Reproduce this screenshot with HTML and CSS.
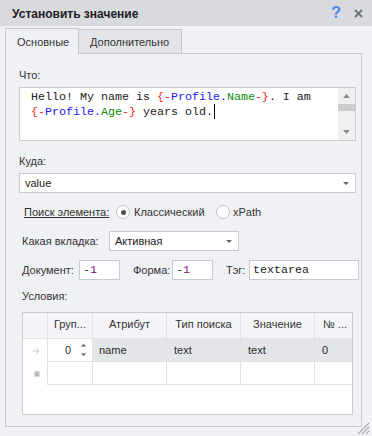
FILE: index.html
```html
<!DOCTYPE html>
<html>
<head>
<meta charset="utf-8">
<link rel="stylesheet" href="styles.css">
</head>
<body>
<div class="dialog">
  <div class="titlebar">
    <div class="title">Установить значение</div>
    <div class="tb-icons">
      <span class="help">?</span>
      <svg class="close" width="9" height="9" viewBox="0 0 9 9"><path d="M1 1L8 8M8 1L1 8" stroke="#6e7178" stroke-width="1.8" fill="none"/></svg>
    </div>
  </div>
  <div class="tabs">
    <div class="tab active">Основные</div>
    <div class="tab">Дополнительно</div>
  </div>
  <div class="panel">
    <div class="label l-what">Что:</div>
    <div class="codebox">
      <div class="code"><span class="t">Hello! My name is </span><span class="r">{-</span><span class="b">Profile.</span><span class="g">Name</span><span class="r">-}</span><span class="t">. I am</span><br><span class="r">{-</span><span class="b">Profile.</span><span class="g">Age</span><span class="r">-}</span><span class="t"> years old.</span><span class="caret"></span></div>
      <div class="vscroll">
        <div class="sbtn"><svg width="7" height="4" viewBox="0 0 7 4"><path d="M0 4L3.5 0L7 4Z" fill="#8a8c91"/></svg></div>
        <div class="thumb"></div>
        <div class="strack"></div>
        <div class="sbtn"><svg width="7" height="4" viewBox="0 0 7 4"><path d="M0 0L3.5 4L7 0Z" fill="#8a8c91"/></svg></div>
      </div>
    </div>
    <div class="label l-where">Куда:</div>
    <div class="combo wide"><span>value</span><svg width="6" height="3" viewBox="0 0 6 3"><path d="M0 0H6L3 3Z" fill="#666"/></svg></div>
    <div class="radiorow">
      <span class="link">Поиск элемента:</span>
      <span class="radio on"></span><span class="rlabel r1">Классический</span>
      <span class="radio second"></span><span class="rlabel">xPath</span>
    </div>
    <div class="tabrow">
      <span class="label lw-tab">Какая вкладка:</span>
      <div class="combo small"><span>Активная</span><svg width="6" height="3" viewBox="0 0 6 3"><path d="M0 0H6L3 3Z" fill="#666"/></svg></div>
    </div>
    <div class="fieldrow">
      <span class="label lw-doc">Документ:</span>
      <div class="inp num"><span class="dash">-</span><span class="one">1</span></div>
      <span class="label lw-form">Форма:</span>
      <div class="inp num"><span class="dash">-</span><span class="one">1</span></div>
      <span class="label lw-tag">Тэг:</span>
      <div class="inp tag">textarea</div>
    </div>
    <div class="label l-cond">Условия:</div>
    <div class="grid">
      <div class="grow head">
        <div class="c rh"></div>
        <div class="c c1">Груп...</div>
        <div class="c c2">Атрибут</div>
        <div class="c c3">Тип поиска</div>
        <div class="c c4">Значение</div>
        <div class="c c5">№ ...</div>
      </div>
      <div class="grow data sel">
        <div class="c rh"><svg width="7" height="6" viewBox="0 0 7 6"><path d="M0 3H6M3.5 0.5L6 3L3.5 5.5" stroke="#c4c5c9" fill="none" stroke-width="1"/></svg></div>
        <div class="c c1 edit"><span class="zero">0</span><svg class="spin" width="7" height="14" viewBox="0 0 7 14"><path d="M1 3.5L3.5 1L6 3.5Z" fill="#5a5c60"/><path d="M1 10.5L3.5 13L6 10.5Z" fill="#5a5c60"/></svg></div>
        <div class="c c2">name</div>
        <div class="c c3">text</div>
        <div class="c c4">text</div>
        <div class="c c5">0</div>
      </div>
      <div class="grow data">
        <div class="c rh"><svg width="8" height="8" viewBox="0 0 8 8"><path d="M4 0.5V7.5M0.5 4H7.5M1.5 1.5L6.5 6.5M6.5 1.5L1.5 6.5" stroke="#b4b5b9" stroke-width="1.1" fill="none"/></svg></div>
        <div class="c c1"></div>
        <div class="c c2"></div>
        <div class="c c3"></div>
        <div class="c c4"></div>
        <div class="c c5"></div>
      </div>
      <div class="gempty"></div>
    </div>
  </div>
  <svg class="grip" width="14" height="14" viewBox="0 0 14 14"><path d="M13 2L2 13M13 6L6 13M13 10L10 13" stroke="#a9abb0" stroke-width="1.2" fill="none"/></svg>
</div>
</body>
</html>
```
FILE: styles.css
```css
html, body {
  margin: 0;
  padding: 0;
  width: 372px;
  height: 436px;
  overflow: hidden;
  background: #f0f1f5;
}
.dialog {
  position: relative;
  width: 372px;
  height: 436px;
  font-family: "Liberation Sans", Arial, sans-serif;
  font-size: 11px;
  color: #303236;
}
.titlebar {
  height: 26px;
  background: #d8dade;
  display: flex;
  align-items: center;
  padding-left: 12px;
  box-sizing: border-box;
}
.title {
  font-weight: bold;
  font-size: 12px;
  color: #1f2023;
  flex: 1;
  padding-top: 1px;
}
.tb-icons {
  display: flex;
  align-items: center;
  padding-right: 9px;
}
.help {
  font-family: "Liberation Sans", sans-serif;
  font-size: 16px;
  font-weight: bold;
  color: #4c87f2;
  margin-right: 13px;
  line-height: 16px;
}
.tabs {
  margin-top: 2px;
  height: 25px;
  display: flex;
  align-items: flex-end;
  padding-left: 5px;
}
.tab {
  box-sizing: border-box;
  height: 24px;
  padding: 6px 12px 0 11px;
  background: #e3e4e8;
  border-top: 1px solid #c6c8ce;
  border-right: 1px solid #c6c8ce;
  color: #333;
}
.tab.active {
  width: 74px;
  height: 26px;
  margin-bottom: -1px;
  background: #f0f1f5;
  border-left: 1px solid #c6c8ce;
  position: relative;
  z-index: 1;
  padding-top: 7px;
}
.panel {
  box-sizing: border-box;
  margin-left: 5px;
  width: 357px;
  height: 374px;
  border: 1px solid #c6c8ce;
  display: flex;
  flex-direction: column;
  align-items: flex-start;
  padding-left: 13px;
}
.label {
  line-height: 15px;
  color: #333;
  white-space: nowrap;
}
.l-what { margin-top: 14px; }
.codebox {
  margin-top: 4px;
  box-sizing: border-box;
  width: 337px;
  height: 54px;
  background: #fff;
  border: 1px solid #c9cbd1;
  display: flex;
}
.code {
  flex: 1;
  font-family: "Liberation Mono", "Courier New", monospace;
  font-size: 11.67px;
  line-height: 14px;
  padding: 2px 0 0 11px;
  color: #222;
}
.r { color: #ff1a1a; }
.b { color: #1a1aff; }
.g { color: #0c8a0c; }
.caret {
  display: inline-block;
  width: 1px;
  height: 15px;
  background: #000;
  vertical-align: -4px;
  margin-left: 1px;
}
.vscroll {
  width: 17px;
  background: #f0f0f0;
  display: flex;
  flex-direction: column;
}
.sbtn {
  height: 16px;
  display: flex;
  align-items: center;
  justify-content: center;
}
.thumb {
  height: 7px;
  background: #cdcdcd;
}
.strack { flex: 1; }
.l-where { margin-top: 13px; }
.combo {
  box-sizing: border-box;
  height: 20px;
  background: #fff;
  border: 1px solid #c9cbd1;
  display: flex;
  align-items: center;
  justify-content: space-between;
  padding: 0 6px 0 5px;
  color: #222;
}
.combo.wide {
  margin-top: 4px;
  width: 337px;
}
.combo.small {
  width: 130px;
}
.radiorow {
  margin-top: 11px;
  margin-left: 5px;
  height: 16px;
  display: flex;
  align-items: center;
}
.link {
  text-decoration: underline;
  color: #333;
  width: 85px;
  margin-right: 7px;
  white-space: nowrap;
}
.radio {
  box-sizing: border-box;
  width: 14px;
  height: 14px;
  border-radius: 50%;
  border: 1px solid #c3c5ca;
  background: #fff;
  margin-right: 4px;
  display: flex;
  align-items: center;
  justify-content: center;
}
.radio.on::after {
  content: "";
  width: 5px;
  height: 5px;
  border-radius: 50%;
  background: #505256;
}
.r1 { width: 70px; }
.radio.second {
  margin-left: 12px;
  margin-right: 3px;
}
.rlabel { color: #333; white-space: nowrap; }
.tabrow {
  margin-top: 11px;
  margin-left: 3px;
  display: flex;
  align-items: center;
}
.lw-tab { width: 87px; }
.fieldrow {
  margin-top: 9px;
  margin-left: 3px;
  display: flex;
  align-items: center;
}
.lw-doc { width: 56px; }
.lw-form { width: 38px; margin-left: 13px; }
.lw-tag { width: 22px; margin-left: 13px; }
.inp {
  box-sizing: border-box;
  height: 20px;
  background: #fff;
  border: 1px solid #c9cbd1;
  font-family: "Liberation Mono", "Courier New", monospace;
  font-size: 11.67px;
  display: flex;
  align-items: center;
  padding-left: 3px;
  margin-left: 1px;
}
.inp.num { width: 41px; }
.inp.tag { width: 110px; color: #222; }
.dash { color: #333; }
.one { color: #80107f; }
.l-cond { margin-top: 9px; margin-left: 3px; }
.grid {
  margin-top: 8px;
  margin-left: 3px;
  box-sizing: border-box;
  width: 331px;
  height: 103px;
  border: 1px solid #c8cad0;
  background: #fff;
  display: flex;
  flex-direction: column;
}
.grow {
  display: flex;
}
.c {
  box-sizing: border-box;
  border-left: 1px solid #e1e2e6;
  display: flex;
  align-items: center;
  padding-left: 6px;
  color: #2a2b2e;
}
.rh { width: 24px; border-left: none; padding-left: 0; justify-content: center; }
.c1 { width: 45px; }
.c2 { width: 74px; }
.c3 { width: 74px; padding-left: 7px; }
.c4 { width: 74px; padding-left: 7px; }
.c5 { width: 38px; padding-left: 7px; }
.head {
  height: 25px;
  background: #f4f5f8;
  border-bottom: 1px solid #e1e2e6;
}
.head .c {
  justify-content: center;
  padding-left: 0;
  padding-bottom: 3px;
  color: #333;
}
.head .c5 { padding-left: 3px; }
.data .c {
  height: 23px;
  border-bottom: 1px solid #e1e2e6;
}
.data .rh {
  border-bottom: none;
  background: #fff;
  padding-left: 3px;
}
.sel .c { background: #e4e5e9; }
.sel .rh, .sel .edit { background: #fff; }
.edit {
  justify-content: flex-end;
  padding-right: 5px;
}
.zero { margin-right: 9px; }
.gempty { flex: 1; }
.grip {
  position: absolute;
  right: 2px;
  bottom: 1px;
}
```
